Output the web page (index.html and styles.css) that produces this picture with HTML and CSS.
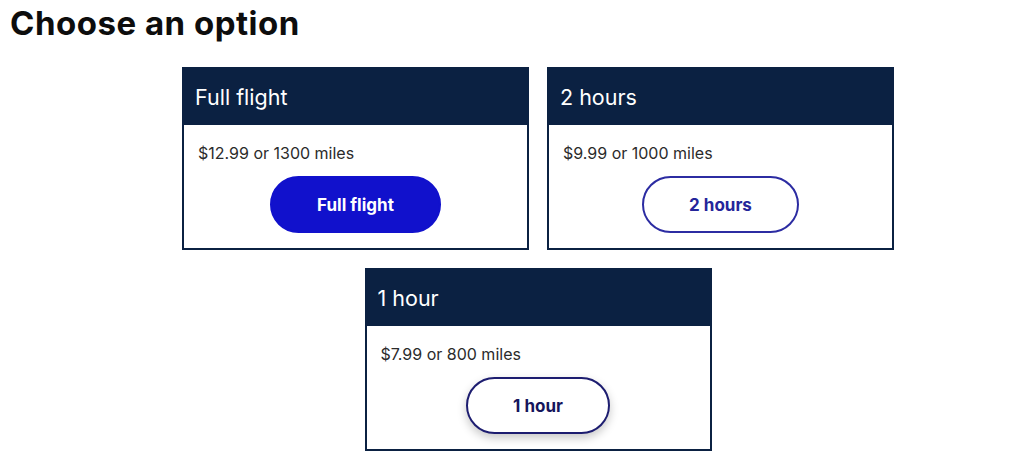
FILE: index.html
```html
<!DOCTYPE html>
<html lang="en">
<head>
<meta charset="utf-8">
<title>Choose an option</title>
<link rel="stylesheet" href="styles.css">
</head>
<body>
  <h1 class="title">Choose an option</h1>
  <div class="options">
    <section class="card">
      <header class="card-head">Full flight</header>
      <div class="card-body">
        <p class="price">$12.99 or 1300 miles</p>
        <button class="btn btn-filled">Full flight</button>
      </div>
    </section>
    <section class="card">
      <header class="card-head">2 hours</header>
      <div class="card-body">
        <p class="price">$9.99 or 1000 miles</p>
        <button class="btn btn-outline">2 hours</button>
      </div>
    </section>
    <section class="card">
      <header class="card-head">1 hour</header>
      <div class="card-body">
        <p class="price">$7.99 or 800 miles</p>
        <button class="btn btn-outline btn-focus">1 hour</button>
      </div>
    </section>
  </div>
</body>
</html>
```

FILE: styles.css
```css
* { box-sizing: border-box; }

body {
  margin: 0;
  background: #ffffff;
  font-family: Inter, "Noto Sans", Roboto, sans-serif;
  color: #111111;
}

.title {
  margin: 4px 0 0 10px;
  font-size: 33px;
  line-height: 38px;
  font-weight: 700;
  letter-spacing: 0.5px;
  color: #0d0d0d;
}

.options {
  display: flex;
  flex-wrap: wrap;
  justify-content: center;
  gap: 18px;
  width: 730px;
  margin: 25px 0 0 173px;
}

.card {
  width: 347px;
  border: 2px solid #0b2142;
  background: #ffffff;
}

.card-head {
  height: 56px;
  display: flex;
  align-items: center;
  padding: 0 11px;
  background: #0b2142;
  color: #ffffff;
  font-size: 21.5px;
  font-weight: 400;
}

.card-body {
  display: flex;
  flex-direction: column;
  align-items: center;
  padding: 18px 14px 15px;
}

.price {
  align-self: flex-start;
  margin: 0 0 13px;
  font-size: 16px;
  line-height: 20px;
  color: #2b2b2b;
}

.btn {
  height: 57px;
  padding: 0 45px;
  border-radius: 29px;
  border: 2px solid #1111cc;
  font-family: inherit;
  font-size: 17px;
  font-weight: 700;
  cursor: pointer;
}

.btn-filled {
  background: #1111cc;
  color: #ffffff;
}

.btn-outline {
  background: #ffffff;
  color: #25259a;
  border-color: #2c2ca2;
}

.btn-focus {
  color: #15155c;
  border-color: #1d1d70;
  box-shadow: 0 4px 10px rgba(0, 0, 0, 0.22);
}
```
